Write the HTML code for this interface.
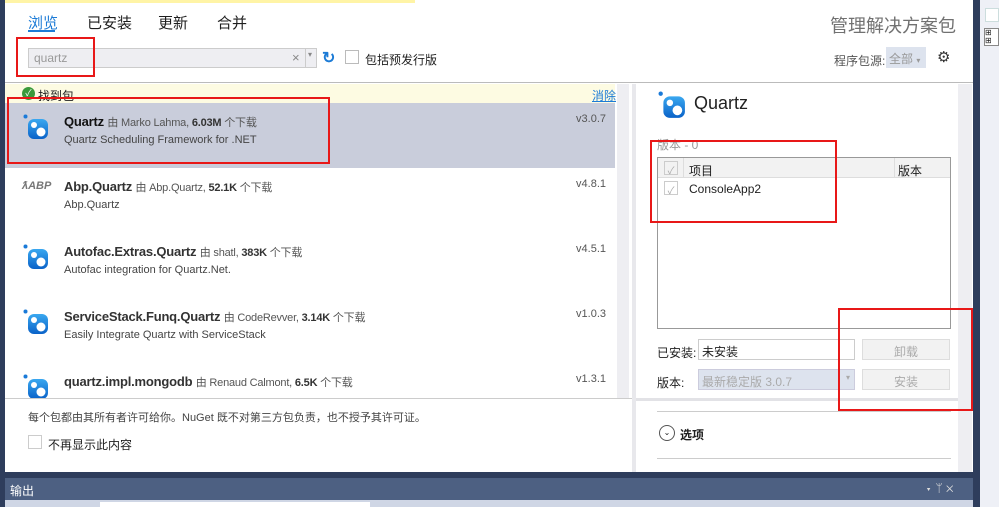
<!DOCTYPE html>
<html><head><meta charset="utf-8"><style>
*{margin:0;padding:0;box-sizing:border-box}
body{width:999px;height:507px;overflow:hidden;position:relative;background:#2e3d5c;font-family:"Liberation Sans","Noto Sans CJK SC",sans-serif;font-size:12px;color:#1e1e1e}
.a{position:absolute}
.red{position:absolute;border:2px solid #e81818}
.ic{position:absolute;width:26px;height:26px}
.row .t{position:absolute;left:59px;top:11px;font-size:13px;font-weight:bold;color:#333;letter-spacing:-0.2px}
.row .t span{font-size:11px;font-weight:normal;color:#555}
.row .t b{font-size:11px;color:#333}
.row .d{position:absolute;left:59px;top:31px;font-size:11px;color:#444}
.row .v{position:absolute;right:9px;top:10px;font-size:11px;color:#555}
.row{position:absolute;left:5px;width:610px;height:65px}
</style></head><body>
<div class="a" style="left:5px;top:0;width:968px;height:472px;background:#fff"></div>
<div class="a" style="left:5px;top:0;width:410px;height:3px;background:#fff4a6"></div>
<div class="a" style="left:980px;top:0;width:19px;height:507px;background:#eef0f6"></div>
<div class="a" style="left:985px;top:8px;width:14px;height:14px;background:#fff;border:1px solid #cdd"></div>
<div class="a" style="left:984px;top:28px;width:15px;height:18px;border:1px solid #888;background:#fff;font-size:8px;line-height:8px">⊞<br>⊞</div>
<div class="a" style="left:28px;top:12px;font-size:15px;color:#1c7bd6">浏览</div>
<div class="a" style="left:28px;top:30px;width:27px;height:2px;background:#1c7bd6"></div>
<div class="a" style="left:87px;top:12px;font-size:15px">已安装</div>
<div class="a" style="left:158px;top:12px;font-size:15px">更新</div>
<div class="a" style="left:217px;top:12px;font-size:15px">合并</div>
<div class="a" style="left:830px;top:12px;font-size:18px;color:#717171">管理解决方案包</div>
<div class="a" style="left:28px;top:48px;width:289px;height:20px;background:#eeeef2;border:1px solid #ccc"></div>
<div class="a" style="left:34px;top:51px;color:#999;font-size:12px">quartz</div>
<div class="a" style="left:292px;top:50px;color:#888;font-size:13px">×</div>
<div class="a" style="left:305px;top:49px;width:1px;height:18px;background:#ccc"></div>
<div class="a" style="left:308px;top:50px;color:#888;font-size:8px">▾</div>
<div class="a" style="left:322px;top:48px;color:#1c7bd6;font-size:16px;font-weight:bold">↻</div>
<div class="a" style="left:345px;top:50px;width:14px;height:14px;border:1px solid #bbb;background:#fff"></div>
<div class="a" style="left:365px;top:51px">包括预发行版</div>
<div class="a" style="left:834px;top:52px;color:#555">程序包源:</div>
<div class="a" style="left:886px;top:47px;width:40px;height:21px;background:#dde3ee;color:#999;padding:3px 0 0 3px">全部 <span style="font-size:8px">▾</span></div>
<div class="a" style="left:937px;top:48px;font-size:15px;color:#333">⚙</div>
<div class="a" style="left:5px;top:82px;width:968px;height:1px;background:#bbb"></div>
<div class="a" style="left:5px;top:84px;width:610px;height:19px;background:#fdfbe2"></div>
<div class="a" style="left:22px;top:87px;width:13px;height:13px;border-radius:50%;background:#3a9a3a;color:#fff;font-size:9px;text-align:center;line-height:13px">✓</div>
<div class="a" style="left:38px;top:87px">找到包</div>
<div class="a" style="left:592px;top:87px;color:#1c7bd6;text-decoration:underline">消除</div>
<div class="a" style="left:617px;top:84px;width:12px;height:314px;background:#eeeef2"></div>
<div class="a" style="left:632px;top:84px;width:4px;height:388px;background:#e8e8ec"></div>
<svg width="0" height="0" style="position:absolute"><defs><linearGradient id="g" x1="0" y1="0" x2="0" y2="1"><stop offset="0" stop-color="#3aa8f0"/><stop offset="1" stop-color="#0a62c8"/></linearGradient></defs></svg>
<div class="row" style="top:103px;background:#c9cddb">
<svg class="ic" style="left:18px;top:11px" viewBox="0 0 26 26"><circle cx="2.5" cy="2.5" r="2" fill="#1a7ad8"/><rect x="5" y="5" width="20" height="20" rx="6" fill="url(#g)"/><circle cx="11" cy="11" r="3" fill="#fff"/><circle cx="18" cy="18" r="4.5" fill="#fff"/></svg>
<div class="t" style="color:#111">Quartz <span>由 Marko Lahma, </span><b>6.03M</b><span> 个下载</span></div>
<div class="d">Quartz Scheduling Framework for .NET</div><div class="v">v3.0.7</div></div>
<div class="row" style="top:168px">
<div class="a" style="left:17px;top:12px;font-size:11px;font-weight:bold;color:#777;font-style:italic">ƛABP</div>
<div class="t">Abp.Quartz <span>由 Abp.Quartz, </span><b>52.1K</b><span> 个下载</span></div>
<div class="d">Abp.Quartz</div><div class="v">v4.8.1</div></div>
<div class="row" style="top:233px">
<svg class="ic" style="left:18px;top:11px" viewBox="0 0 26 26"><circle cx="2.5" cy="2.5" r="2" fill="#1a7ad8"/><rect x="5" y="5" width="20" height="20" rx="6" fill="url(#g)"/><circle cx="11" cy="11" r="3" fill="#fff"/><circle cx="18" cy="18" r="4.5" fill="#fff"/></svg>
<div class="t">Autofac.Extras.Quartz <span>由 shatl, </span><b>383K</b><span> 个下载</span></div>
<div class="d">Autofac integration for Quartz.Net.</div><div class="v">v4.5.1</div></div>
<div class="row" style="top:298px">
<svg class="ic" style="left:18px;top:11px" viewBox="0 0 26 26"><circle cx="2.5" cy="2.5" r="2" fill="#1a7ad8"/><rect x="5" y="5" width="20" height="20" rx="6" fill="url(#g)"/><circle cx="11" cy="11" r="3" fill="#fff"/><circle cx="18" cy="18" r="4.5" fill="#fff"/></svg>
<div class="t">ServiceStack.Funq.Quartz <span>由 CodeRevver, </span><b>3.14K</b><span> 个下载</span></div>
<div class="d">Easily Integrate Quartz with ServiceStack</div><div class="v">v1.0.3</div></div>
<div class="row" style="top:363px;height:35px;overflow:hidden">
<svg class="ic" style="left:18px;top:11px" viewBox="0 0 26 26"><circle cx="2.5" cy="2.5" r="2" fill="#1a7ad8"/><rect x="5" y="5" width="20" height="20" rx="6" fill="url(#g)"/><circle cx="11" cy="11" r="3" fill="#fff"/><circle cx="18" cy="18" r="4.5" fill="#fff"/></svg>
<div class="t">quartz.impl.mongodb <span>由 Renaud Calmont, </span><b>6.5K</b><span> 个下载</span></div>
<div class="v">v1.3.1</div></div>
<div class="a" style="left:5px;top:398px;width:627px;height:1px;background:#ccc"></div>
<div class="a" style="left:28px;top:409px;color:#444;font-size:11px">每个包都由其所有者许可给你。NuGet 既不对第三方包负责，也不授予其许可证。</div>
<div class="a" style="left:28px;top:435px;width:14px;height:14px;border:1px solid #ccc"></div>
<div class="a" style="left:48px;top:436px">不再显示此内容</div>
<div class="a" style="left:958px;top:84px;width:14px;height:388px;background:#eeeef2"></div>
<svg class="a" style="left:658px;top:91px" width="28" height="28" viewBox="0 0 26 26"><circle cx="2.5" cy="2.5" r="2" fill="#1a7ad8"/><rect x="5" y="5" width="20" height="20" rx="6" fill="url(#g)"/><circle cx="11" cy="11" r="3" fill="#fff"/><circle cx="18" cy="18" r="4.5" fill="#fff"/></svg>
<div class="a" style="left:694px;top:93px;font-size:18px;color:#222">Quartz</div>
<div class="a" style="left:657px;top:136px;color:#999">版本 - 0</div>
<div class="a" style="left:657px;top:157px;width:294px;height:172px;border:1px solid #999;background:#fff"></div>
<div class="a" style="left:658px;top:158px;width:292px;height:20px;background:#f2f2f2;border-bottom:1px solid #ddd"></div>
<div class="a" style="left:683px;top:158px;width:1px;height:20px;background:#ddd"></div>
<div class="a" style="left:894px;top:158px;width:1px;height:20px;background:#ddd"></div>
<div class="a" style="left:664px;top:161px;width:14px;height:14px;border:1px solid #ccc;color:#aaa;font-size:10px;text-align:center">✓</div>
<div class="a" style="left:689px;top:162px">项目</div>
<div class="a" style="left:898px;top:162px">版本</div>
<div class="a" style="left:664px;top:181px;width:14px;height:14px;border:1px solid #ccc;color:#aaa;font-size:10px;text-align:center">✓</div>
<div class="a" style="left:689px;top:182px">ConsoleApp2</div>
<div class="a" style="left:657px;top:344px">已安装:</div>
<div class="a" style="left:698px;top:339px;width:157px;height:21px;border:1px solid #ccc;padding:3px 3px">未安装</div>
<div class="a" style="left:862px;top:339px;width:88px;height:21px;border:1px solid #ddd;background:#f2f2f2;color:#aaa;text-align:center;padding-top:3px">卸载</div>
<div class="a" style="left:657px;top:374px">版本:</div>
<div class="a" style="left:698px;top:369px;width:157px;height:21px;background:#dde3ee;border:1px solid #ccd;color:#aaa;padding:3px 3px">最新稳定版 3.0.7<span style="position:absolute;right:4px;font-size:8px">▾</span></div>
<div class="a" style="left:862px;top:369px;width:88px;height:21px;border:1px solid #ddd;background:#f2f2f2;color:#aaa;text-align:center;padding-top:3px">安装</div>
<div class="a" style="left:636px;top:398px;width:322px;height:3px;background:#e2e2e6"></div>
<div class="a" style="left:657px;top:411px;width:294px;height:1px;background:#ccc"></div>
<div class="a" style="left:659px;top:425px;width:16px;height:16px;border:1px solid #555;border-radius:50%;font-size:8px;text-align:center;line-height:14px">⌄</div>
<div class="a" style="left:680px;top:426px;font-weight:bold">选项</div>
<div class="a" style="left:657px;top:458px;width:294px;height:1px;background:#ccc"></div>
<div class="a" style="left:5px;top:478px;width:968px;height:22px;background:#4d6082"></div>
<div class="a" style="left:10px;top:482px;color:#fff">输出</div>
<div class="a" style="left:925px;top:481px;color:#ddd;font-size:12px">▾ ᛘ ✕</div>
<div class="a" style="left:5px;top:500px;width:968px;height:7px;background:#cfd6e5"></div>
<div class="a" style="left:100px;top:502px;width:270px;height:5px;background:#fff"></div>
<div class="red" style="left:16px;top:37px;width:79px;height:40px"></div>
<div class="red" style="left:7px;top:97px;width:323px;height:67px"></div>
<div class="red" style="left:650px;top:140px;width:187px;height:83px"></div>
<div class="red" style="left:838px;top:308px;width:135px;height:103px"></div>
</body></html>
